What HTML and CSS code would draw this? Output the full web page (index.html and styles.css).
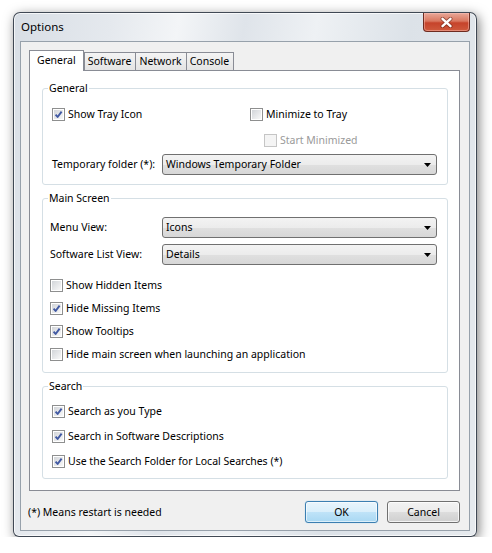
FILE: index.html
```html
<!DOCTYPE html>
<html lang="en">
<head>
<meta charset="utf-8">
<title>Options</title>
<link rel="stylesheet" href="styles.css">
</head>
<body>
<div class="window">
  <div class="titlebar">
    <span class="title">Options</span>
    <button class="close" type="button" aria-label="Close">
      <svg width="13" height="11" viewBox="0 0 13 11">
        <path d="M2.5 1.8 L10.5 9.2 M10.5 1.8 L2.5 9.2" stroke="#5b1b10" stroke-width="4" stroke-linecap="round" opacity="0.55"/>
        <path d="M2.5 1.8 L10.5 9.2 M10.5 1.8 L2.5 9.2" stroke="#fff" stroke-width="2.4" stroke-linecap="round"/>
      </svg>
    </button>
  </div>

  <div class="client">
    <div class="tabstrip">
      <span class="tab active">General</span>
      <span class="tab">Software</span>
      <span class="tab">Network</span>
      <span class="tab">Console</span>
    </div>

    <div class="panel">
      <fieldset class="group group-general">
        <legend>General</legend>
        <div class="row">
          <label class="check wide"><span class="box on"><svg viewBox="0 0 9 9"><path d="M1.6 4.6 L3.6 7 L7.6 1.6"/></svg></span>Show Tray Icon</label>
          <label class="check"><span class="box"></span>Minimize to Tray</label>
        </div>
        <div class="row indent">
          <label class="check disabled"><span class="box"></span>Start Minimized</label>
        </div>
        <div class="field field-first">
          <span class="field-label">Temporary folder (*):</span>
          <div class="combo"><span>Windows Temporary Folder</span><svg width="7" height="4" viewBox="0 0 7 4"><path d="M0 0 H7 L3.5 4 Z"/></svg></div>
        </div>
      </fieldset>

      <fieldset class="group group-main">
        <legend>Main Screen</legend>
        <div class="field">
          <span class="field-label">Menu View:</span>
          <div class="combo"><span>Icons</span><svg width="7" height="4" viewBox="0 0 7 4"><path d="M0 0 H7 L3.5 4 Z"/></svg></div>
        </div>
        <div class="field field-next">
          <span class="field-label">Software List View:</span>
          <div class="combo"><span>Details</span><svg width="7" height="4" viewBox="0 0 7 4"><path d="M0 0 H7 L3.5 4 Z"/></svg></div>
        </div>
        <div class="checklist">
          <label class="check"><span class="box"></span>Show Hidden Items</label>
          <label class="check"><span class="box on"><svg viewBox="0 0 9 9"><path d="M1.6 4.6 L3.6 7 L7.6 1.6"/></svg></span>Hide Missing Items</label>
          <label class="check"><span class="box on"><svg viewBox="0 0 9 9"><path d="M1.6 4.6 L3.6 7 L7.6 1.6"/></svg></span>Show Tooltips</label>
          <label class="check"><span class="box"></span>Hide main screen when launching an application</label>
        </div>
      </fieldset>

      <fieldset class="group group-search">
        <legend>Search</legend>
        <div class="checklist">
          <label class="check"><span class="box on"><svg viewBox="0 0 9 9"><path d="M1.6 4.6 L3.6 7 L7.6 1.6"/></svg></span>Search as you Type</label>
          <label class="check"><span class="box on"><svg viewBox="0 0 9 9"><path d="M1.6 4.6 L3.6 7 L7.6 1.6"/></svg></span>Search in Software Descriptions</label>
          <label class="check"><span class="box on"><svg viewBox="0 0 9 9"><path d="M1.6 4.6 L3.6 7 L7.6 1.6"/></svg></span>Use the Search Folder for Local Searches (*)</label>
        </div>
      </fieldset>
    </div>

    <div class="footer">
      <span class="note">(*) Means restart is needed</span>
      <button class="btn btn-default" type="button">OK</button>
      <button class="btn" type="button">Cancel</button>
    </div>
  </div>
</div>
</body>
</html>
```

FILE: styles.css
```css
* {
  box-sizing: border-box;
}

body {
  margin: 0;
  background: #fff;
  font-family: "Noto Sans", "Open Sans", sans-serif;
  font-size: 10.5px;
  line-height: 15px;
  color: #000;
}

/* Glass window frame */
.window {
  margin: 12px 0 0 13px;
  width: 464px;
  height: 525px;
  display: flex;
  flex-direction: column;
  padding: 0 6px 5px 6px;
  border: 1px solid rgba(35, 45, 58, 0.85);
  border-radius: 7px 7px 6px 6px;
  background: linear-gradient(100deg, #d8dee5 0%, #e5e9ee 18%, #f3f5f7 30%, #dfe4ea 42%, #eef1f4 55%, #dce2e8 72%, #e6eaee 100%);
  box-shadow: inset 0 0 0 1px rgba(255, 255, 255, 0.7), 2px 3px 12px rgba(0, 0, 0, 0.5);
}

.titlebar {
  height: 28px;
  display: flex;
  justify-content: space-between;
  align-items: flex-start;
}

.title {
  font-size: 11.5px;
  line-height: 28px;
  padding-left: 1px;
  color: #000;
}

.close {
  width: 47px;
  height: 19px;
  padding: 0;
  display: flex;
  align-items: center;
  justify-content: center;
  border: 1px solid #6e2b20;
  border-top: 0;
  border-radius: 0 0 4px 4px;
  background: linear-gradient(#e9a899 0%, #d9775f 45%, #c6432b 55%, #cf5a3d 100%);
  box-shadow: inset 0 0 0 1px rgba(255, 200, 190, 0.45);
}

/* Dialog client area */
.client {
  flex: 1;
  display: flex;
  flex-direction: column;
  padding: 8px 9px 0 8px;
  border: 1px solid #97a1ab;
  background: #f0f0f0;
}

.tabstrip {
  display: flex;
  align-items: flex-end;
  height: 20px;
}

.tab {
  height: 18px;
  padding: 0 4px 0 3px;
  display: flex;
  align-items: center;
  border: 1px solid #898c95;
  border-bottom: 0;
  background: linear-gradient(#f4f4f4, #e4e4e4);
}

.tab + .tab {
  margin-left: -1px;
}

.tab.active {
  position: relative;
  z-index: 1;
  height: 21px;
  margin-bottom: -1px;
  padding: 0 7px 1px;
  background: #fff;
}

.tab.active + .tab {
  margin-left: 0;
}

.panel {
  height: 421px;
  display: flex;
  flex-direction: column;
  gap: 6px;
  padding: 10px 11px 0 12px;
  border: 1px solid #898c95;
  background: #fff;
}

/* Group boxes */
.group {
  margin: 0;
  min-width: 0;
  padding: 11px 10px 9px 9px;
  border: 1px solid #d5dfe5;
  border-radius: 3px;
}

.group legend {
  padding: 0 1px;
  margin-left: -4px;
  line-height: 15px;
}

.group-main {
  padding: 11px 10px 10px 7px;
}

.group-main legend {
  margin-left: -2px;
}

.group-search {
  padding: 10px 10px 9px 9px;
}

.row {
  display: flex;
}

.row.indent {
  margin-top: 11px;
  padding-left: 212px;
}

.check {
  display: flex;
  align-items: center;
  gap: 3px;
  height: 15px;
  white-space: nowrap;
}

.check.wide {
  width: 198px;
}

.check.disabled {
  color: #9a9a9a;
}

.box {
  width: 13px;
  height: 13px;
  flex: none;
  padding: 1px;
  border: 1px solid #8e8f8f;
  background: linear-gradient(135deg, #d2d5d9, #f8f8f8) content-box, #fff;
}

.check.disabled .box {
  border-color: #c5c5c5;
  background: #f4f4f4;
}

.box svg {
  display: block;
  width: 9px;
  height: 9px;
}

.box svg path {
  fill: none;
  stroke: #4159a3;
  stroke-width: 1.9;
  stroke-linejoin: round;
}

.checklist {
  display: flex;
  flex-direction: column;
  gap: 8px;
  margin-top: 13px;
}

.group-search .checklist {
  gap: 10px;
  margin-top: 0;
}

/* Label + combo box rows */
.field {
  display: flex;
  align-items: center;
}

.field-first {
  margin-top: 6px;
}

.field-next {
  margin-top: 6px;
}

.field-label {
  width: 110px;
  flex: none;
}

.group-main .field-label {
  width: 112px;
}

.combo {
  flex: 1;
  height: 21px;
  display: flex;
  align-items: center;
  justify-content: space-between;
  padding: 0 5px 0 3px;
  border: 1px solid #707070;
  border-radius: 3px;
  background: linear-gradient(#f3f3f3 0%, #ececec 50%, #e0e0e0 51%, #d7d7d7 100%);
}

.combo svg {
  fill: #000;
}

/* Footer with note and dialog buttons */
.footer {
  display: flex;
  align-items: center;
  padding-top: 10px;
}

.note {
  margin-left: -1px;
  margin-right: auto;
}

.btn {
  width: 73px;
  height: 22px;
  padding: 0;
  font: inherit;
  color: #000;
  border: 1px solid #707070;
  border-radius: 3px;
  background: linear-gradient(#f2f2f2 0%, #ebebeb 50%, #dddddd 51%, #cfcfcf 100%);
  box-shadow: inset 0 0 0 1px rgba(255, 255, 255, 0.75);
}

.btn + .btn {
  margin-left: 9px;
}

.btn-default {
  border-color: #3c7fb1;
  background: linear-gradient(#e9f5fc 0%, #d9effb 50%, #bfe3f8 51%, #a9d8f3 100%);
  box-shadow: inset 0 0 0 1px rgba(255, 255, 255, 0.6), 0 0 1px 0 #7fc0e8;
}
```
